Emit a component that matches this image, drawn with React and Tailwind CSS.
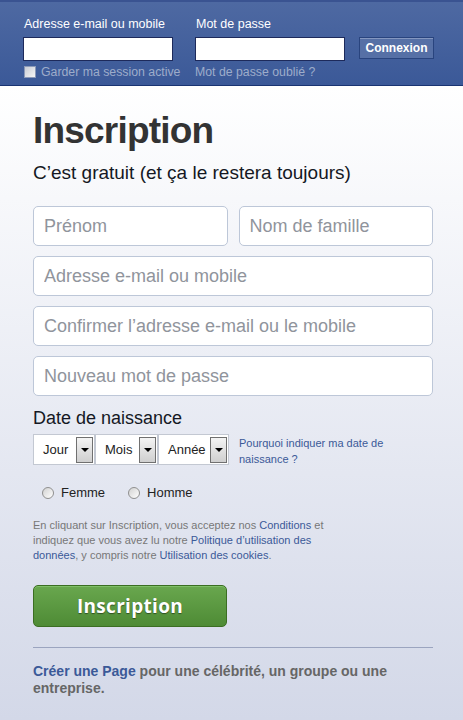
export default function App() {
  const Arrow = () => (
    <span className="ml-auto mr-px flex h-[26px] w-[17px] shrink-0 items-center justify-center border border-[#707070] bg-linear-to-b from-[#f4f4f4] to-[#cfcfcf]">
      <span className="block h-0 w-0 border-x-[4px] border-t-[4px] border-x-transparent border-t-black" />
    </span>
  );
  const Radio = () => (
    <span className="block h-[12px] w-[12px] shrink-0 rounded-full border border-[#8f8f8f] bg-linear-to-br from-[#d2d2d2] to-white" />
  );
  return (
    <div className="flex min-h-[720px] flex-col font-['Liberation_Sans',Arial,sans-serif]">
      <header className="flex h-[86px] items-start border-t-2 border-b border-t-[#3a5391] border-b-[#1a3472] bg-linear-to-b from-[#4e69a2] to-[#3b5998] pl-[23px] pt-[15px]">
        <div className="flex w-[150px] shrink-0 flex-col">
          <label className="whitespace-nowrap pl-px text-[12.5px] leading-[15px] text-white">Adresse e-mail ou mobile</label>
          <input className="mt-[5px] h-[24px] w-[150px] border border-[#1d2a5b] bg-white px-[3px] text-[12px] outline-none" />
          <div className="mt-[3px] flex h-[16px] items-center gap-[5px] pl-px">
            <span className="block h-[12px] w-[12px] shrink-0 border border-[#8b99b8] bg-linear-to-br from-[#c9cdd6] to-[#f5f5f5]" />
            <span className="whitespace-nowrap text-[12.3px] text-[#9dacca]">Garder ma session active</span>
          </div>
        </div>
        <div className="ml-[22px] flex w-[150px] shrink-0 flex-col">
          <label className="whitespace-nowrap pl-px text-[12.5px] leading-[15px] text-white">Mot de passe</label>
          <input type="password" className="mt-[5px] h-[24px] w-[150px] border border-[#1d2a5b] bg-white px-[3px] text-[12px] outline-none" />
          <div className="mt-[3px] flex h-[16px] items-center">
            <span className="whitespace-nowrap text-[12.3px] text-[#9dacca]">Mot de passe oublié ?</span>
          </div>
        </div>
        <button className="ml-[14px] mt-[20px] flex h-[22px] w-[75px] shrink-0 items-center justify-center border border-[#29447e] bg-[#5670a6] text-[12px] font-bold text-white shadow-[inset_0_1px_0_#8497c0]">
          Connexion
        </button>
      </header>

      <main className="flex-1 bg-linear-to-b from-white to-[#d3d8e8] pl-[33px] pr-[30px] pt-[23px]">
        <h1 className="text-[37px] font-bold leading-[44px] tracking-[-0.8px] text-[#333]">Inscription</h1>
        <p className="mt-[8px] text-[19px] leading-[24px] text-[#141823]">C’est gratuit (et ça le restera toujours)</p>

        <div className="mt-[21px] flex flex-col gap-[10px]">
          <div className="grid grid-cols-2 gap-[11px]">
            <input placeholder="Prénom" className="h-[40px] w-full rounded-[5px] border border-[#bdc7d8] bg-white px-[10px] text-[18px] outline-none placeholder:text-[#90949c]" />
            <input placeholder="Nom de famille" className="h-[40px] w-full rounded-[5px] border border-[#bdc7d8] bg-white px-[10px] text-[18px] outline-none placeholder:text-[#90949c]" />
          </div>
          <input placeholder="Adresse e-mail ou mobile" className="h-[40px] w-full rounded-[5px] border border-[#bdc7d8] bg-white px-[10px] text-[18px] outline-none placeholder:text-[#90949c]" />
          <input placeholder="Confirmer l’adresse e-mail ou le mobile" className="h-[40px] w-full rounded-[5px] border border-[#bdc7d8] bg-white px-[10px] text-[18px] outline-none placeholder:text-[#90949c]" />
          <input type="password" placeholder="Nouveau mot de passe" className="h-[40px] w-full rounded-[5px] border border-[#bdc7d8] bg-white px-[10px] text-[18px] outline-none placeholder:text-[#90949c]" />
        </div>

        <div className="mt-[11px] text-[18px] leading-[22px] text-[#141823]">Date de naissance</div>
        <div className="mt-[5px] flex items-start">
          <div className="flex h-[31px] w-[62px] items-center border border-[#c3c8d2] bg-white">
            <span className="pl-[9px] text-[13px] text-[#222]">Jour</span>
            <Arrow />
          </div>
          <div className="flex h-[31px] w-[63px] items-center border border-[#c3c8d2] bg-white">
            <span className="pl-[9px] text-[13px] text-[#222]">Mois</span>
            <Arrow />
          </div>
          <div className="flex h-[31px] w-[71px] items-center border border-[#c3c8d2] bg-white">
            <span className="pl-[9px] text-[13px] text-[#222]">Année</span>
            <Arrow />
          </div>
          <a className="ml-[10px] mt-px w-[150px] text-[11px] leading-[16px] text-[#3b5998]">Pourquoi indiquer ma date de naissance ?</a>
        </div>

        <div className="mt-[16px] flex h-[20px] items-center pl-[9px] text-[13px] text-[#222]">
          <Radio />
          <span className="ml-[7px]">Femme</span>
          <span className="ml-[23px]"><Radio /></span>
          <span className="ml-[7px]">Homme</span>
        </div>

        <p className="mt-[15px] w-[305px] text-[11px] leading-[15px] text-[#777]">
          En cliquant sur Inscription, vous acceptez nos <a className="text-[#3b5998]">Conditions</a> et indiquez que vous avez lu notre <a className="text-[#3b5998]">Politique d’utilisation des données</a>, y compris notre <a className="text-[#3b5998]">Utilisation des cookies</a>.
        </p>

        <button className="mt-[22px] flex h-[42px] w-[194px] items-center justify-center rounded-[5px] border border-[#3b6e22] bg-linear-to-b from-[#69a74e] to-[#4e8b35] font-['Open_Sans',sans-serif] text-[19px] font-bold tracking-[0.3px] text-white shadow-[inset_0_1px_0_#7fbf67] [text-shadow:0_1px_1px_rgba(0,0,0,0.45)]">
          Inscription
        </button>

        <div className="mt-[20px] h-px w-full bg-[#9ba4bf]" />

        <p className="mt-[15px] text-[14px] font-bold leading-[17px] text-[#666]">
          <a className="text-[#3b5998]">Créer une Page</a> pour une célébrité, un groupe ou une entreprise.
        </p>
      </main>
    </div>
  );
}
